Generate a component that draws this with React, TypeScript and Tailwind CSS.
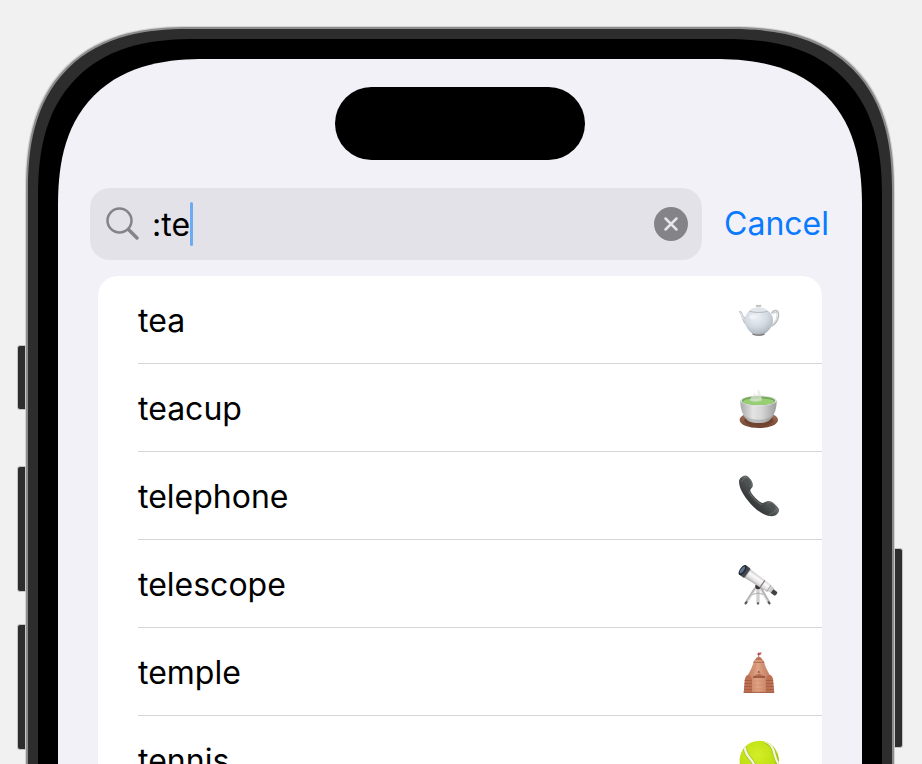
import type { ReactNode } from "react";

function Teapot() {
  return (
    <svg viewBox="0 0 42 42" className="size-[42px] shrink-0" aria-hidden="true">
      <defs>
        <radialGradient id="pot-body" cx="0.4" cy="0.25" r="0.8">
          <stop offset="0" stopColor="#eef2f6" />
          <stop offset="0.5" stopColor="#d3dae1" />
          <stop offset="0.82" stopColor="#b4bcc5" />
          <stop offset="1" stopColor="#85878c" />
        </radialGradient>
      </defs>
      <path d="M34 14.500c2-3.400 5.500-3 6 .5.500 4-1.800 9.500-6.500 11.500" fill="none" stroke="#b9bcc0" strokeWidth="2.600" />
      <path d="M34.200 14.500c2-2.900 4.900-2.500 5.300.5.400 3.600-1.600 8.500-5.500 10.600" fill="none" stroke="#e9ebed" strokeWidth="1" />
      <path d="M.6 12.600c1.200-1 2.700-.6 3.400.7 1.200 2.600 1.800 5.700 5.500 5.700l.5 8C5.500 25.200 4.500 21 3.300 17.500 2.600 15.300 1.800 14 .6 12.600Z" fill="#c3c8ce" />
      <path d="M2.600 13.600c1.500 2.200 1.800 6.400 4.800 8.200" stroke="#eef1f3" strokeWidth="1" fill="none" />
      <path d="M11.800 11.500h17.400c3.500 2 5.800 5.400 5.800 9.500 0 6-3.500 10.600-8.500 13.600v1.100c-3.500 1.500-8.500 1.500-12 0v-1.100C10 31.600 7 27 7 21c0-4.100 1.800-7.500 4.800-9.500Z" fill="url(#pot-body)" />
      <path d="M14.500 35c3.500 1.600 8.500 1.600 12 0" stroke="#77706f" strokeWidth="1" fill="none" />
      <path d="M11.300 12c1.700-2.900 5.400-3.700 9.200-3.700s7.500.8 9.200 3.700c-5 1.500-13.400 1.500-18.400 0Z" fill="#e2e6ea" />
      <path d="M11.500 12.300c5 1.500 13 1.500 18 0" fill="none" stroke="#a5aeb7" strokeWidth="0.800" />
      <ellipse cx="20.600" cy="7.100" rx="2.900" ry="1.200" fill="#c9cccc" />
      <circle cx="19" cy="6.500" r="0.800" fill="#aeb1b2" />
      <circle cx="22" cy="6.500" r="0.800" fill="#aeb1b2" />
      <ellipse cx="14.500" cy="18" rx="3" ry="2.500" fill="#f3f6f9" opacity="0.7" />
    </svg>
  );
}

function Teacup() {
  return (
    <svg viewBox="0 0 42 42" className="size-[42px] shrink-0" aria-hidden="true">
      <defs>
        <linearGradient id="cup-body" x1="0" x2="1">
          <stop offset="0" stopColor="#a9a9a9" />
          <stop offset="0.35" stopColor="#e4e4e5" />
          <stop offset="0.6" stopColor="#d5d5d6" />
          <stop offset="1" stopColor="#9c9c9d" />
        </linearGradient>
        <linearGradient id="cup-saucer" x1="0" y1="0" x2="0" y2="1">
          <stop offset="0" stopColor="#a67860" />
          <stop offset="1" stopColor="#71432f" />
        </linearGradient>
      </defs>
      <ellipse cx="20.800" cy="33" rx="19.200" ry="8" fill="url(#cup-saucer)" />
      <ellipse cx="20.800" cy="33.500" rx="14.500" ry="5.200" fill="#6e4330" />
      <path d="M2.300 13.700c0 8 2.200 14.500 6.700 19 4 4.400 19 4.400 23 0 4.500-4.500 6.700-11 6.700-19Z" fill="url(#cup-body)" />
      <path d="M6.500 28.500c6 5.500 22 5.500 28 0-.7 1.600-1.500 3-2.500 4.200-4 4.400-19 4.400-23 0-1-1.200-1.800-2.600-2.500-4.200Z" fill="#8c8988" opacity="0.4" />
      <ellipse cx="20.500" cy="13.600" rx="18.200" ry="5.200" fill="#e1e3df" />
      <ellipse cx="20.500" cy="13.700" rx="16.600" ry="4.400" fill="#73a85b" />
      <ellipse cx="20.500" cy="14.700" rx="15.400" ry="3.300" fill="#98cf75" />
      <path d="M12 13.500c0-4.500 5-4 3.500-8 3.500 2 1.500 4 3.500 4.500 2-2.500-1-5 2-8 0 4 4 6.500 2.500 11.500-3 1.500-8.500 1.500-11.500 0Z" fill="#dfe6dc" opacity="0.7" />
    </svg>
  );
}

function Telephone() {
  return (
    <svg viewBox="0 0 42 42" className="size-[42px] shrink-0" aria-hidden="true">
      <defs>
        <linearGradient id="handset" x1="0" y1="1" x2="1" y2="0">
          <stop offset="0.300" stopColor="#343737" />
          <stop offset="0.480" stopColor="#4b4e4e" />
          <stop offset="0.560" stopColor="#6c6f70" />
          <stop offset="0.660" stopColor="#373a3a" />
        </linearGradient>
      </defs>
      <path d="M1 6.500C1 3.500 4.500.3 7.500.4c2.200.1 3.500 2 5 3.900 1.800 2.400 2.600 4.200 2.300 6.700-.3 2.300-2.700 2.700-2.500 4.400.4 3.300 8.700 11.700 12 12.500 1.900.4 3.200-1.500 5.500-1.800 2.500-.3 4.500.9 7 3.200 2.300 2.200 4.500 4.200 4.300 6.300-.2 2.900-3.600 5.700-7.300 5.700-6.600 0-14.800-5.200-21.300-12.600C5.800 21 1 13.200 1 6.500Z" fill="url(#handset)" />
      <path d="M3 7c1.500-2 3.500-3.500 5.500-4.500M31 39.500c2.800-.5 5.800-2.500 7.500-5" fill="none" stroke="#6b6e6e" strokeWidth="0.900" />
      <path d="M11 16.500c1.500 4 7.500 10.500 12.500 13" fill="none" stroke="#8b8d8d" strokeWidth="1" opacity="0.700" />
      <ellipse cx="9.500" cy="7" rx="2.600" ry="4.200" transform="rotate(-38 9.500 7)" fill="#505353" />
      <ellipse cx="34" cy="31.500" rx="2.400" ry="4.200" transform="rotate(-50 34 31.500)" fill="#505353" />
    </svg>
  );
}

function Telescope() {
  return (
    <svg viewBox="0 0 42 42" className="size-[42px] shrink-0" aria-hidden="true">
      <defs>
        <linearGradient id="scope-tube" x1="0" y1="0" x2="0" y2="1">
          <stop offset="0" stopColor="#c9c9cb" />
          <stop offset="0.350" stopColor="#fbfbfc" />
          <stop offset="0.700" stopColor="#e2dfe0" />
          <stop offset="1" stopColor="#aaa5a6" />
        </linearGradient>
      </defs>
      <path d="M17.500 25 7.500 40.500M20 25v16M22.500 25 31.500 40.500" stroke="#b7b4b5" strokeWidth="2.800" fill="none" />
      <path d="M18 26 9.500 39M20 26v13M22 26l7.500 13" stroke="#eceaea" strokeWidth="1" fill="none" />
      <path d="m9 38.500-2 2.800M20 39.500v2M30.200 38.500l1.800 2.800" stroke="#535157" strokeWidth="1.800" />
      <path d="m14.500 31.500 5.500-1.500 5.500 1.500" stroke="#a09d9f" strokeWidth="0.800" fill="none" />
      <circle cx="20" cy="23.500" r="2.800" fill="#38353b" />
      <path d="m19 21 8 4.500" stroke="#2f2e34" strokeWidth="3" />
      <g transform="translate(1 1) rotate(35 5 7)">
        <rect x="38.500" y="5" width="6.500" height="4.600" rx="1.600" fill="#424147" />
        <path d="M34 3.600h5.500v6.200H34Z" fill="#cfcdce" />
        <path d="M8 1.800 36 3v8L8 12.200Z" fill="url(#scope-tube)" />
        <path d="M27.500 2.800v8.600" stroke="#78767b" strokeWidth="1.200" />
        <path d="M35.300 3.200v7.300" stroke="#a7a5a9" strokeWidth="1" />
        <rect x="2.200" y="1.200" width="7" height="11.600" rx="1.500" fill="#41464f" />
        <ellipse cx="3.300" cy="7" rx="2.700" ry="5.800" fill="#23262f" />
        <ellipse cx="3" cy="7" rx="1.600" ry="4" fill="#5e718d" />
        <path d="M9.300 1.600v10.800" stroke="#8c8d92" strokeWidth="0.800" />
      </g>
    </svg>
  );
}

function Temple() {
  return (
    <svg viewBox="0 0 42 42" className="size-[42px] shrink-0" aria-hidden="true">
      <defs>
        <linearGradient id="temple-wall" x1="0" x2="1">
          <stop offset="0" stopColor="#c07a5b" />
          <stop offset="0.450" stopColor="#e1a384" />
          <stop offset="1" stopColor="#bd785a" />
        </linearGradient>
      </defs>
      <path d="M20.700 9V1.500" stroke="#8e594b" strokeWidth="0.900" />
      <path d="M20.700 2 23.600 1.300 22.800 3.600 20.700 4.200 18.600 3Z" fill="#b9504e" />
      <path d="M17.800 8c0-2.800 6-2.800 6 0l1.800 1.800H16Z" fill="#bc7153" />
      <path d="M16 9.500h9.700c.9 4.800 3.300 9.500 6 14.500l1.500 17.700H8.500L10 24c2.700-5 5.100-9.700 6-14.500Z" fill="url(#temple-wall)" />
      <path d="M15.500 11.300h10.800" stroke="#a65f43" strokeWidth="0.900" />
      <path d="M18.200 13c-.8 4.500-2.700 8-4.500 12M23.500 13c.8 4.500 2.700 8 4.500 12" stroke="#c98a6e" strokeWidth="0.800" fill="none" />
      <path d="M6.700 29c.4-3 1.700-5 3.500-5s3.300 2 3.800 4.500v13.200H5.700Z" fill="#bd7152" />
      <path d="M35.200 29c-.4-3-1.700-5-3.500-5s-3.300 2-3.800 4.500v13.200h8.300Z" fill="#bd7152" />
      <path d="M6.700 29.500h7M6.500 32.500H14M6.200 35.500H14M6 38.500h8M28 29.500h7M28 32.500h7.400M28 35.500h7.700M28 38.500h8" stroke="#a35d43" strokeWidth="0.900" />
      <path d="m16 25 4.900-2.600L26 25Z" fill="#b76e50" />
      <path d="M15 26h12" stroke="#8d4934" strokeWidth="1.500" />
      <path d="m19.300 21.500 1.600-1.400 1.600 1.400Z" fill="#793c2b" />
      <path d="M15 30h12M14.500 34h12.700M14.300 38h13" stroke="#cf8d6f" strokeWidth="0.800" />
      <path d="M5.700 41.300h30.500" stroke="#a05b40" strokeWidth="1" />
    </svg>
  );
}

function TennisBall() {
  return (
    <svg viewBox="0 0 42 42" className="size-[42px] shrink-0" aria-hidden="true">
      <defs>
        <radialGradient id="ball" cx="0.450" cy="0.350" r="0.650">
          <stop offset="0" stopColor="#d4ee28" />
          <stop offset="0.700" stopColor="#bfe012" />
          <stop offset="1" stopColor="#93b70b" />
        </radialGradient>
        <clipPath id="ball-edge">
          <circle cx="21.300" cy="21.500" r="19.700" />
        </clipPath>
      </defs>
      <circle cx="21.300" cy="21.500" r="19.700" fill="url(#ball)" />
      <g clipPath="url(#ball-edge)" fill="none">
        <path d="M7 7.500c-.5 8 5 11 9 17.500S25 36 36 37" stroke="#9fbd24" strokeWidth="3.600" />
        <path d="M7 7.500c-.5 8 5 11 9 17.500S25 36 36 37" stroke="#f3f6dc" strokeWidth="2.300" />
        <path d="M27 2.500c5 1.500 7.500 5.500 8.700 9.500s1.300 8 5 13" stroke="#9fbd24" strokeWidth="3.600" />
        <path d="M27 2.500c5 1.500 7.500 5.500 8.700 9.500s1.300 8 5 13" stroke="#f3f6dc" strokeWidth="2.300" />
      </g>
    </svg>
  );
}

const results: { name: string; icon: ReactNode }[] = [
  { name: "tea", icon: <Teapot /> },
  { name: "teacup", icon: <Teacup /> },
  { name: "telephone", icon: <Telephone /> },
  { name: "telescope", icon: <Telescope /> },
  { name: "temple", icon: <Temple /> },
  { name: "tennis", icon: <TennisBall /> },
];

function SearchBar() {
  return (
    <form className="mt-7 flex items-center gap-[22px] pr-[33px] pl-8" onSubmit={(e) => e.preventDefault()}>
      <div className="flex h-[72px] min-w-0 flex-1 items-center rounded-[20px] bg-[#e3e2e8] pr-3.5 pl-4">
        <svg viewBox="0 0 34 34" className="size-[34px] shrink-0" fill="none" stroke="#838388" aria-hidden="true">
          <circle cx="13.500" cy="13.500" r="12" strokeWidth="2.500" />
          <path d="M22.500 22.500 31 31" strokeWidth="3.400" strokeLinecap="round" />
        </svg>
        <label htmlFor="emoji-search" className="sr-only">
          Search emoji
        </label>
        <input
          id="emoji-search"
          type="text"
          defaultValue=":te"
          autoComplete="off"
          className="ml-3 h-12 field-sizing-content min-w-0 bg-transparent pt-0.5 pr-1 text-[32px] text-black caret-[#6ea9f2] outline-none"
        />
        <span className="-ml-1 h-11 w-[3px] shrink-0 rounded-full bg-[#6ea9f2]" />
        <button type="button" aria-label="Clear search" className="ml-auto shrink-0">
          <svg viewBox="0 0 34 34" className="size-[34px]" aria-hidden="true">
            <circle cx="17" cy="17" r="17" fill="#838388" />
            <path d="m11.500 11.500 11 11M22.500 11.500l-11 11" stroke="#e6e5ea" strokeWidth="2.500" strokeLinecap="round" />
          </svg>
        </button>
      </div>
      <button type="button" className="text-[32px] leading-10 text-[#0a7aff]">
        Cancel
      </button>
    </form>
  );
}

function ResultList() {
  return (
    <ul className="mx-10 mt-4 rounded-t-[20px] bg-white">
      {results.map((item) => (
        <li key={item.name} className="ml-10 border-b border-[#d6d6d9]">
          <button type="button" className="flex h-[87px] w-full items-center justify-between pr-[42px] text-left text-[32px] leading-10 text-black">
            <span className="pt-0.5">{item.name}</span>
            {item.icon}
          </button>
        </li>
      ))}
    </ul>
  );
}

export default function App() {
  const key = "absolute w-[9px] border border-[#c4c4c4] bg-[#2d2d2d]";
  return (
    <main className="h-screen overflow-hidden bg-[#f1f1f1] pt-[27px] pr-7 pl-[26px] font-['Inter','Liberation_Sans',sans-serif]">
      <div className="relative">
        <span className={`${key} top-[318px] -left-[9px] h-[65px] rounded-l-[3px]`} />
        <span className={`${key} top-[439px] -left-[9px] h-[126px] rounded-l-[3px]`} />
        <span className={`${key} top-[597px] -left-[9px] h-[126px] rounded-l-[3px]`} />
        <span className={`${key} top-[521px] -right-[9px] h-[200px] rounded-r-[3px]`} />
        <div className="rounded-t-[164px] border-x-2 border-t-2 border-[#8c8c8c] bg-[#2d2d2d] px-2.5 pt-2.5 shadow-[0_0_0_1px_#d4d4d4] [corner-shape:superellipse(1.3)]">
          <div className="rounded-t-[158px] bg-black px-5 pt-5 [corner-shape:superellipse(1.3)]">
            <div className="rounded-t-[148px] bg-[#f2f1f7] pt-7 [corner-shape:superellipse(1.3)]">
              <div className="mx-auto h-[73px] w-[250px] rounded-full bg-black" />
              <SearchBar />
              <ResultList />
            </div>
          </div>
        </div>
      </div>
    </main>
  );
}
